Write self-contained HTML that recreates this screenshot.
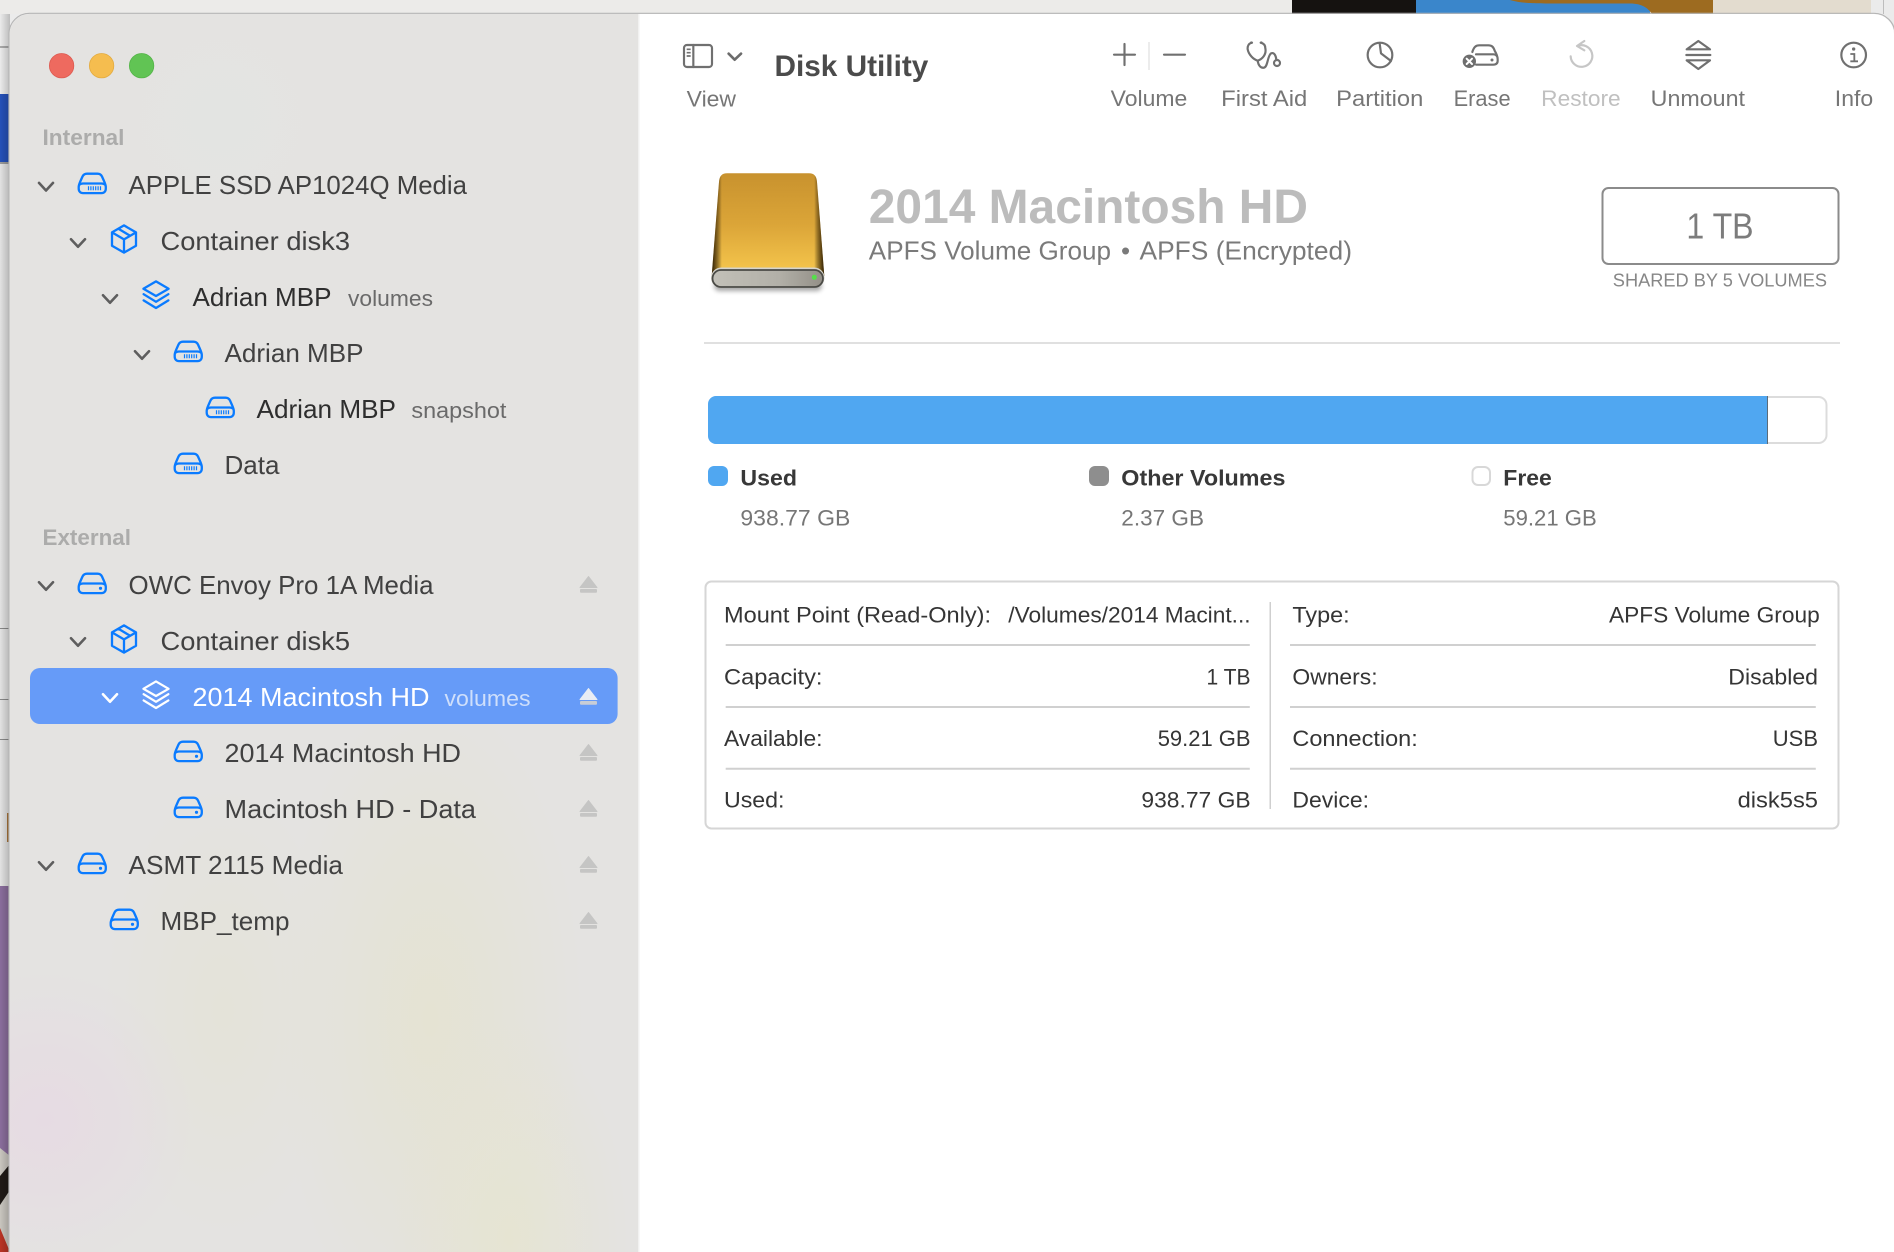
<!DOCTYPE html>
<html lang="en">
<head>
<meta charset="utf-8">
<title>Disk Utility</title>
<style>
html,body{margin:0;padding:0;width:1894px;height:1252px;overflow:hidden;background:#e9e9e9}
svg{display:block;position:absolute;left:0;top:0}
text{font-family:"Liberation Sans",sans-serif;white-space:pre}
.r{font-size:26px;fill:#414141}
.d{font-size:26px;fill:#2e2e2e}
.s{font-size:22px;fill:#6a6a6a}
.h{font-size:22px;font-weight:bold;fill:#acacab}
.t{font-size:22px;fill:#767676}
.v{font-size:22.5px;fill:#767676}
.b{font-size:22.5px;font-weight:bold;fill:#383838}
.k{font-size:22.5px;fill:#353535}
.ic{fill:none;stroke:#0a7bff;stroke-width:2.3;stroke-linecap:round;stroke-linejoin:round}
.ch{fill:none;stroke:#5e5e5e;stroke-width:2.6;stroke-linecap:round;stroke-linejoin:round}
.tb{fill:none;stroke:#707070;stroke-width:6.5;stroke-linecap:round;stroke-linejoin:round}
</style>
</head>
<body>
<svg width="1894" height="1252" viewBox="0 0 1894 1252" xmlns="http://www.w3.org/2000/svg">
<defs>
<clipPath id="sideClip"><path d="M9.5,1252 V34 A20,20 0 0 1 29.5,14 H639 V1252 Z"/></clipPath>
<radialGradient id="y1" gradientUnits="userSpaceOnUse" cx="430" cy="1020" r="220" gradientTransform="translate(430 1020) scale(.7 1.5) translate(-430 -1020)"><stop offset="0" stop-color="#e5e3cf" stop-opacity=".8"/><stop offset=".5" stop-color="#e5e3cf" stop-opacity=".4"/><stop offset="1" stop-color="#e5e3cf" stop-opacity="0"/></radialGradient>
<radialGradient id="y2" gradientUnits="userSpaceOnUse" cx="510" cy="1240" r="170" gradientTransform="translate(510 1240) scale(.7 1.3) translate(-510 -1240)"><stop offset="0" stop-color="#e6e4cf" stop-opacity=".8"/><stop offset=".5" stop-color="#e6e4cf" stop-opacity=".4"/><stop offset="1" stop-color="#e6e4cf" stop-opacity="0"/></radialGradient>
<radialGradient id="y3" gradientUnits="userSpaceOnUse" cx="223" cy="1010" r="150" gradientTransform="translate(223 1010) scale(.8 1.5) translate(-223 -1010)"><stop offset="0" stop-color="#e4e3d3" stop-opacity=".6"/><stop offset=".5" stop-color="#e4e3d3" stop-opacity=".3"/><stop offset="1" stop-color="#e4e3d3" stop-opacity="0"/></radialGradient>
<radialGradient id="p1" gradientUnits="userSpaceOnUse" cx="45" cy="1120" r="150"><stop offset="0" stop-color="#e6dbe3"/><stop offset=".5" stop-color="#e6dbe3" stop-opacity=".55"/><stop offset="1" stop-color="#e6dbe3" stop-opacity="0"/></radialGradient>
<radialGradient id="g1" gradientUnits="userSpaceOnUse" cx="220" cy="120" r="110"><stop offset="0" stop-color="#e3e4e2"/><stop offset="1" stop-color="#e3e4e2" stop-opacity="0"/></radialGradient>
<linearGradient id="shade" x1="0" y1="0" x2="1" y2="0"><stop offset="0" stop-color="#000" stop-opacity="0"/><stop offset="1" stop-color="#000" stop-opacity=".2"/></linearGradient>
<linearGradient id="gold" x1="0" y1="0" x2="0" y2="1"><stop offset="0" stop-color="#c8922e"/><stop offset=".5" stop-color="#dba538"/><stop offset="1" stop-color="#f7c84e"/></linearGradient>
<linearGradient id="edge" x1="0" y1="0" x2="1" y2="0"><stop offset="0" stop-color="#1e1200" stop-opacity=".95"/><stop offset=".04" stop-color="#2a1a00" stop-opacity=".6"/><stop offset=".09" stop-color="#000" stop-opacity="0"/><stop offset=".91" stop-color="#000" stop-opacity="0"/><stop offset=".96" stop-color="#2a1a00" stop-opacity=".6"/><stop offset="1" stop-color="#1e1200" stop-opacity=".95"/></linearGradient>
<linearGradient id="pill" x1="0" y1="0" x2="1" y2="0"><stop offset="0" stop-color="#c2c0b8"/><stop offset=".6" stop-color="#b2b0a8"/><stop offset="1" stop-color="#938f87"/></linearGradient>
<filter id="bl" x="-20%" y="-100%" width="140%" height="300%"><feGaussianBlur stdDeviation="2.5"/></filter>

<g id="hd">
<path class="ic" d="M1.2,14.5 C1.2,12.5 2.2,10.5 3,8.5 L5,4 C6,2 7.5,1.2 9.5,1.2 H20 C22,1.2 23.5,2 24.5,4 L26.5,8.5 C27.3,10.5 28.3,12.5 28.3,14.5 V16 C28.3,19 26.5,20.6 24,20.6 H5.5 C3,20.6 1.2,19 1.2,16 Z"/>
<path class="ic" d="M2,12.2 C3,11.3 4,11 5.5,11 H24 C25.5,11 26.5,11.3 27.5,12.2"/>
</g>
<g id="hdDot"><use href="#hd"/><circle cx="23" cy="15.8" r="1.6" fill="#0a7bff"/></g>
<g id="hdGrill"><use href="#hd"/>
<path fill="none" stroke="#0a7bff" stroke-width="1.2" d="M11,13.8V17.8M13.4,13.8V17.8M15.8,13.8V17.8M18.2,13.8V17.8M20.6,13.8V17.8M23,13.8V17.8"/></g>
<g id="box">
<path class="ic" d="M0,-13.6 L12,-6.6 V6.8 L0,13.6 L-12,6.8 V-6.6 Z M-12,-6.6 L0,0.4 L12,-6.6 M0,0.4 V13.6 M-5.6,-10.2 L6.2,-3.2"/>
</g>
<g id="stack">
<path class="ic" d="M0,-13.6 L12.6,-6.2 L0,1 L-12.6,-6.2 Z M-12.4,-0.8 L0,6.8 L12.4,-0.8 M-12.4,5.4 L0,13 L12.4,5.4"/>
</g>
<g id="stackW">
<path fill="none" stroke="#fff" stroke-width="2.2" stroke-linecap="round" stroke-linejoin="round" d="M0,-13.6 L12.6,-6.2 L0,1 L-12.6,-6.2 Z M-12.4,-0.8 L0,6.8 L12.4,-0.8 M-12.4,5.4 L0,13 L12.4,5.4"/>
</g>
<g id="chev"><path class="ch" d="M-7,-3.8 L0,3.8 L7,-3.8"/></g>
<g id="ej">
<path d="M8.5,0.5 L17,11.5 H0 Z" fill="#c5c5c4" stroke="#c5c5c4" stroke-width="1" stroke-linejoin="round"/>
<rect x="0" y="13" width="17" height="3.800" rx="1" fill="#c5c5c4"/>
</g>
</defs>

<!-- desktop background strips -->
<rect x="0" y="0" width="1894" height="1252" fill="#ebebeb"/>
<rect x="0" y="0" width="1292" height="14" fill="#ecebe9"/>
<rect x="1292" y="0" width="124" height="14" fill="#151210"/>
<rect x="1416" y="0" width="234" height="14" fill="#3a86cb"/>
<path d="M1510,0 C1520,3 1530,3.500 1560,3.500 H1630 C1642,3.500 1648,8 1652,14 H1713 V0 Z" fill="#9d6b20"/>
<rect x="1713" y="0" width="158" height="14" fill="#e3dccf"/>
<rect x="1883" y="0" width="1" height="14" fill="#bdbdbd"/>
<rect x="0" y="46" width="10" height="2" fill="#a9a9a9"/>
<rect x="0" y="94" width="10" height="68" fill="#2450b8"/>
<rect x="0" y="162" width="10" height="2" fill="#9a9a9a"/>
<rect x="0" y="164" width="10" height="722" fill="#e2e2e2"/>
<rect x="0" y="628" width="10" height="1" fill="#888"/>
<rect x="0" y="699" width="10" height="1" fill="#888"/>
<rect x="0" y="739" width="10" height="1" fill="#888"/>
<rect x="7" y="813" width="3" height="29" fill="#a8743a"/>
<rect x="0" y="886" width="10" height="366" fill="#8a6d9c"/>
<path d="M0,1148 L10,1156 V1252 H0 Z" fill="#c9c6bf"/>
<path d="M0,1176 L10,1164 V1190 L0,1205 Z" fill="#1f1a16"/>
<path d="M0,1228 L10,1252 H0 Z" fill="#b93224"/>
<rect x="0" y="14" width="10" height="1238" fill="url(#shade)"/>

<!-- window -->
<path d="M9.5,1252 V34 A20,20 0 0 1 29.5,14 H1874 A20,20 0 0 1 1894,34 V1252 Z" fill="#fff"/>
<path d="M9,1252 V34 A20.500,20.500 0 0 1 29.5,13.300 H1874 A21,21 0 0 1 1895,34" fill="none" stroke="#b5b5b5" stroke-width="1.200"/>

<!-- sidebar -->
<g clip-path="url(#sideClip)">
<rect x="0" y="0" width="639" height="1252" fill="#e4e3e1"/>
<rect x="0" y="0" width="639" height="1252" fill="url(#g1)"/>
<rect x="0" y="0" width="639" height="1252" fill="url(#y1)"/>
<rect x="0" y="0" width="639" height="1252" fill="url(#y2)"/>
<rect x="0" y="0" width="639" height="1252" fill="url(#y3)"/>
<rect x="0" y="0" width="639" height="1252" fill="url(#p1)"/>
</g>
<rect x="638" y="14" width="1.500" height="1238" fill="#f1f1f0"/>

<!-- traffic lights -->
<circle cx="61.600" cy="65.700" r="12.200" fill="#ee6a5f" stroke="#dd5a50" stroke-width=".8"/>
<circle cx="101.600" cy="65.700" r="12.200" fill="#f5bd4f" stroke="#e3ab3f" stroke-width=".8"/>
<circle cx="141.600" cy="65.700" r="12.200" fill="#61c454" stroke="#53b447" stroke-width=".8"/>

<!-- sidebar list: internal -->
<text class="h" x="42.500" y="145" textLength="82" lengthAdjust="spacingAndGlyphs">Internal</text>
<use href="#chev" x="46" y="186.700"/>
<use href="#hdGrill" x="77.500" y="172.500"/>
<text class="r" x="128.500" y="194" textLength="338.500" lengthAdjust="spacingAndGlyphs">APPLE SSD AP1024Q Media</text>
<use href="#chev" x="78" y="243"/>
<use href="#box" x="124" y="239"/>
<text class="r" x="160.500" y="250" textLength="189.500" lengthAdjust="spacingAndGlyphs">Container disk3</text>
<use href="#chev" x="110" y="299"/>
<use href="#stack" x="156" y="295"/>
<text class="d" x="192.500" y="306" textLength="139" lengthAdjust="spacingAndGlyphs">Adrian MBP</text>
<text class="s" x="348" y="306" textLength="85" lengthAdjust="spacingAndGlyphs">volumes</text>
<use href="#chev" x="142" y="355"/>
<use href="#hdGrill" x="173.500" y="340.500"/>
<text class="r" x="224.500" y="362" textLength="139" lengthAdjust="spacingAndGlyphs">Adrian MBP</text>
<use href="#hdGrill" x="205.500" y="396.500"/>
<text class="d" x="256.500" y="418" textLength="139.500" lengthAdjust="spacingAndGlyphs">Adrian MBP</text>
<text class="s" x="411.400" y="418" textLength="95" lengthAdjust="spacingAndGlyphs">snapshot</text>
<use href="#hdGrill" x="173.500" y="452.500"/>
<text class="r" x="224.500" y="474" textLength="55" lengthAdjust="spacingAndGlyphs">Data</text>

<!-- sidebar list: external -->
<text class="h" x="42.500" y="545" textLength="88.500" lengthAdjust="spacingAndGlyphs">External</text>
<use href="#chev" x="46" y="586"/>
<use href="#hdDot" x="77.500" y="572.500"/>
<text class="r" x="128.500" y="594" textLength="305" lengthAdjust="spacingAndGlyphs">OWC Envoy Pro 1A Media</text>
<use href="#ej" x="580" y="576"/>
<use href="#chev" x="78" y="642"/>
<use href="#box" x="124" y="639"/>
<text class="r" x="160.500" y="650" textLength="189.500" lengthAdjust="spacingAndGlyphs">Container disk5</text>

<rect x="30" y="668" width="587.600" height="56" rx="10" fill="#669bf8"/>
<path d="M103,694.200 L110,701.800 L117,694.200" fill="none" stroke="#fff" stroke-width="2.600" stroke-linecap="round" stroke-linejoin="round"/>
<use href="#stackW" x="156" y="695"/>
<text x="192.500" y="706" font-size="26" fill="#fff" textLength="237" lengthAdjust="spacingAndGlyphs">2014 Macintosh HD</text>
<text x="444.500" y="706" font-size="22" fill="#cfdffb" textLength="86" lengthAdjust="spacingAndGlyphs">volumes</text>
<path d="M588.500,688.500 L597,699.500 H580 Z" fill="#e9edf4" stroke="#e9edf4" stroke-linejoin="round"/>
<rect x="580" y="701" width="17" height="3.800" rx="1" fill="#c8cdd6"/>

<use href="#hdDot" x="173.500" y="740.500"/>
<text class="r" x="224.500" y="762" textLength="236.500" lengthAdjust="spacingAndGlyphs">2014 Macintosh HD</text>
<use href="#ej" x="580" y="744"/>
<use href="#hdDot" x="173.500" y="796.500"/>
<text class="r" x="224.500" y="818" textLength="251.500" lengthAdjust="spacingAndGlyphs">Macintosh HD - Data</text>
<use href="#ej" x="580" y="800"/>
<use href="#chev" x="46" y="866"/>
<use href="#hdDot" x="77.500" y="852.500"/>
<text class="r" x="128.500" y="874" textLength="214.500" lengthAdjust="spacingAndGlyphs">ASMT 2115 Media</text>
<use href="#ej" x="580" y="856"/>
<use href="#hdDot" x="109.500" y="908.500"/>
<text class="r" x="160.500" y="930" textLength="129" lengthAdjust="spacingAndGlyphs">MBP_temp</text>
<use href="#ej" x="580" y="912"/>

<!-- toolbar: view -->
<g transform="translate(660 20) scale(.33333)">
<rect x="72" y="75" width="84" height="66" rx="9" class="tb"/>
<path class="tb" d="M100,75 V141"/>
<path d="M80,88H92M80,98H92M80,108H92" fill="none" stroke="#707070" stroke-width="5"/>
<path d="M206,101 L224,119 L243,101" fill="none" stroke="#6c6c6c" stroke-width="8" stroke-linecap="round" stroke-linejoin="round"/>
</g>
<text class="t" x="686.700" y="106.500" textLength="49.300" lengthAdjust="spacingAndGlyphs">View</text>
<text x="774.500" y="76" font-size="30" font-weight="bold" fill="#4b4b4b" textLength="153.800" lengthAdjust="spacingAndGlyphs">Disk Utility</text>

<!-- toolbar: volume, first aid, partition -->
<g transform="translate(1090 20) scale(.33333)">
<path class="tb" d="M72,104 H135 M103.500,72 V135 M222,104 H285"/>
<path d="M177,66 V150" stroke="#e9e9e9" stroke-width="5" fill="none"/>
<path class="tb" d="M486,68 C476,70 472,78 473,88 C476,104 490,118 503,122 C516,118 530,104 526,85 C526,76 522,70 512,68 M503,122 C505,136 512,145 522,143 C534,140 532,108 543,100 C553,96 558,108 559,119"/>
<circle cx="561" cy="129" r="9" class="tb"/>
<circle cx="484" cy="68" r="4" fill="#707070"/><circle cx="514" cy="68" r="4" fill="#707070"/>
<circle cx="870" cy="105" r="37" class="tb"/>
<path class="tb" d="M869,70 L873,100 L903,123"/>
</g>
<text class="t" x="1110.700" y="106" textLength="76.600" lengthAdjust="spacingAndGlyphs">Volume</text>
<text class="t" x="1221.200" y="106" textLength="86.100" lengthAdjust="spacingAndGlyphs">First Aid</text>
<text class="t" x="1336.200" y="106" textLength="87.100" lengthAdjust="spacingAndGlyphs">Partition</text>

<!-- toolbar: erase -->
<g transform="translate(1440 30) scale(.33333)">
<path class="tb" d="M97,66 C102,50 108,46 118,46 H145 C155,46 160,50 164,62 C170,72 173,80 173,88 V92 C173,100 168,104 160,104 H108 M108,73 H160 C166,73 170,76 172,81"/>
<circle cx="156" cy="90" r="4.500" fill="#707070"/>
<circle cx="88" cy="94" r="20" fill="#6e6e6e"/>
<path d="M80,86 L96,102 M96,86 L80,102" stroke="#fff" stroke-width="6" stroke-linecap="round" fill="none"/>
</g>
<text class="t" x="1453.600" y="106" textLength="57" lengthAdjust="spacingAndGlyphs">Erase</text>

<!-- toolbar: restore, unmount, info -->
<g transform="translate(1490 0) scale(.33333)">
<path class="tb" style="stroke:#c6c6c6" d="M262,138 A32.500,32.500 0 1 1 242,169 M283,123 L261,138 L283,151"/>
<path class="tb" d="M625,123 L660,148 H590 Z M589,165 H661 M590,181 H660 L625,207 Z"/>
<circle cx="1091" cy="165" r="37" class="tb"/>
<circle cx="1091" cy="147" r="5" fill="#707070"/>
<path d="M1081,162 H1093 V183 M1081,184 H1104" fill="none" stroke="#707070" stroke-width="5.500"/>
</g>
<text class="t" x="1541.200" y="106" textLength="79.500" lengthAdjust="spacingAndGlyphs" style="fill:#c0c0c0">Restore</text>
<text class="t" x="1650.700" y="106" textLength="94.300" lengthAdjust="spacingAndGlyphs">Unmount</text>
<text class="t" x="1834.800" y="106" textLength="38.400" lengthAdjust="spacingAndGlyphs">Info</text>

<!-- disk image -->
<rect x="714" y="281" width="108" height="10" rx="5" fill="#000" opacity=".35" filter="url(#bl)"/>
<path d="M727,173.300 H809 C814,173.300 816.500,176 817,182 L824.300,276 H711.700 L719,182 C719.500,176 722,173.300 727,173.300 Z" fill="url(#gold)"/>
<path d="M727,173.300 H809 C814,173.300 816.500,176 817,182 L824.300,276 H711.700 L719,182 C719.500,176 722,173.300 727,173.300 Z" fill="url(#edge)"/>
<rect x="711" y="267.500" width="113.500" height="20.500" rx="10.200" fill="#d6d4cc"/>
<rect x="712.500" y="270" width="110.500" height="17" rx="8.500" fill="url(#pill)" stroke="#4a4a46" stroke-width="1.800"/>
<circle cx="814.300" cy="277.300" r="2.500" fill="#55e04a"/>

<!-- header -->
<text x="868.800" y="223" font-size="48" font-weight="bold" fill="#bcbcbc" textLength="439.200" lengthAdjust="spacingAndGlyphs">2014 Macintosh HD</text>
<text x="868.800" y="259.300" font-size="26" fill="#7a7a7a" textLength="242.200" lengthAdjust="spacingAndGlyphs">APFS Volume Group</text>
<text x="1121" y="259.300" font-size="26" fill="#7a7a7a">•</text>
<text x="1139.500" y="259.300" font-size="26" fill="#7a7a7a" textLength="212.500" lengthAdjust="spacingAndGlyphs">APFS (Encrypted)</text>
<rect x="1602.500" y="188" width="236" height="76" rx="6" fill="#fff" stroke="#8b8b8b" stroke-width="2"/>
<text x="1686.400" y="238.300" font-size="36" fill="#7c7c7c" textLength="67.200" lengthAdjust="spacingAndGlyphs">1 TB</text>
<text x="1612.800" y="286.700" font-size="18" fill="#878787" textLength="214.200" lengthAdjust="spacingAndGlyphs">SHARED BY 5 VOLUMES</text>
<rect x="704" y="342" width="1136" height="2" fill="#e0e0e0"/>

<!-- usage bar -->
<rect x="709" y="397" width="1117.500" height="46" rx="8" fill="#fff" stroke="#dcdcdc" stroke-width="2"/>
<path d="M716,396 H1767 V444 H716 A8,8 0 0 1 708,436 V404 A8,8 0 0 1 716,396 Z" fill="#50a7f1"/>
<rect x="1767" y="396" width="1" height="48" fill="#5c6b78"/>

<!-- legend -->
<rect x="708" y="466" width="20" height="20" rx="6" fill="#50a7f1"/>
<text class="b" x="740.400" y="485.700" textLength="56.600" lengthAdjust="spacingAndGlyphs">Used</text>
<text class="v" x="740.400" y="525.700" textLength="109.900" lengthAdjust="spacingAndGlyphs">938.77 GB</text>
<rect x="1089" y="466" width="20" height="20" rx="6" fill="#8e8e8e"/>
<text class="b" x="1121.300" y="485.700" textLength="164.200" lengthAdjust="spacingAndGlyphs">Other Volumes</text>
<text class="v" x="1121.300" y="525.700" textLength="82.700" lengthAdjust="spacingAndGlyphs">2.37 GB</text>
<rect x="1472.500" y="467" width="17.500" height="18" rx="5.500" fill="#fff" stroke="#d8d8d8" stroke-width="2"/>
<text class="b" x="1503.300" y="485.700" textLength="48.500" lengthAdjust="spacingAndGlyphs">Free</text>
<text class="v" x="1503.300" y="525.700" textLength="93.400" lengthAdjust="spacingAndGlyphs">59.21 GB</text>

<!-- info table -->
<rect x="705.500" y="581.500" width="1133" height="247" rx="6" fill="#fff" stroke="#d6d6d6" stroke-width="2"/>
<path d="M725.700,645H1249.800M725.700,707H1249.800M725.700,768.700H1249.800M1290,645H1815.800M1290,707H1815.800M1290,768.700H1815.800" stroke="#d0d0d0" stroke-width="2" fill="none"/>
<rect x="1269.500" y="602" width="1.500" height="207" fill="#cfcfcf"/>

<text class="k" x="724" y="622.300" textLength="267" lengthAdjust="spacingAndGlyphs">Mount Point (Read-Only):</text>
<text class="k" x="1008.300" y="622.300" textLength="242.300" lengthAdjust="spacingAndGlyphs">/Volumes/2014 Macint...</text>
<text class="k" x="724" y="684.300" textLength="98.500" lengthAdjust="spacingAndGlyphs">Capacity:</text>
<text class="k" x="1206.500" y="684.300" textLength="44.100" lengthAdjust="spacingAndGlyphs">1 TB</text>
<text class="k" x="724" y="746" textLength="98.500" lengthAdjust="spacingAndGlyphs">Available:</text>
<text class="k" x="1157.700" y="746" textLength="92.900" lengthAdjust="spacingAndGlyphs">59.21 GB</text>
<text class="k" x="724" y="807.700" textLength="60.500" lengthAdjust="spacingAndGlyphs">Used:</text>
<text class="k" x="1141.400" y="807.700" textLength="109.200" lengthAdjust="spacingAndGlyphs">938.77 GB</text>

<text class="k" x="1292.400" y="622.300" textLength="57.300" lengthAdjust="spacingAndGlyphs">Type:</text>
<text class="k" x="1609" y="622.300" textLength="210.700" lengthAdjust="spacingAndGlyphs">APFS Volume Group</text>
<text class="k" x="1292.400" y="684.300" textLength="85.200" lengthAdjust="spacingAndGlyphs">Owners:</text>
<text class="k" x="1728.300" y="684.300" textLength="89.700" lengthAdjust="spacingAndGlyphs">Disabled</text>
<text class="k" x="1292.400" y="746" textLength="125.400" lengthAdjust="spacingAndGlyphs">Connection:</text>
<text class="k" x="1772.800" y="746" textLength="45.200" lengthAdjust="spacingAndGlyphs">USB</text>
<text class="k" x="1292.400" y="807.700" textLength="76.600" lengthAdjust="spacingAndGlyphs">Device:</text>
<text class="k" x="1737.600" y="807.700" textLength="80.400" lengthAdjust="spacingAndGlyphs">disk5s5</text>
</svg>
</body>
</html>
